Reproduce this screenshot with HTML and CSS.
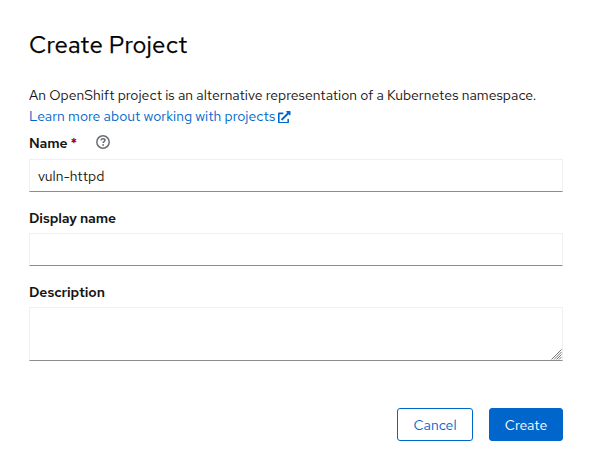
FILE: index.html
```html
<!DOCTYPE html>
<html lang="en">
<head>
<meta charset="utf-8">
<title>Create Project</title>
<link rel="stylesheet" href="styles.css">
</head>
<body>
<main class="modal">
  <h1 class="title"><span>Create Project</span></h1>
  <p class="intro">
    <span class="sentence">An OpenShift project is an alternative representation of a Kubernetes namespace.</span>
    <a class="link" href="#"><span class="link-text">Learn more about working with projects</span><svg class="external" viewBox="0 0 512 512" aria-hidden="true"><path fill="currentColor" d="M432 320h-32a16 16 0 0 0-16 16v112H64V128h144a16 16 0 0 0 16-16V80a16 16 0 0 0-16-16H48a48 48 0 0 0-48 48v352a48 48 0 0 0 48 48h352a48 48 0 0 0 48-48V336a16 16 0 0 0-16-16zM488 0H360c-21.400 0-32 25.900-17 41l35.700 35.700L135 320.400a24 24 0 0 0 0 34L157.700 377a24 24 0 0 0 34 0L435.300 133.300 471 169c15 15 41 4.500 41-17V24a24 24 0 0 0-24-24z"/></svg></a>
  </p>
  <form class="form">
    <div class="field">
      <div class="label-row">
        <label class="label" for="name">Name</label><span class="required">*</span>
        <svg class="help" viewBox="0 0 14 14" aria-hidden="true"><circle cx="7" cy="7" r="6.200"/><path d="M5 5.400C5.200 4.200 6 3.700 7 3.700c1.200 0 2 .7 2 1.600 0 1.300-1.900 1.400-1.900 2.800"/><circle class="dot" cx="7.100" cy="10" r=".9"/></svg>
      </div>
      <input class="control" id="name" type="text" value="vuln-httpd">
    </div>
    <div class="field">
      <div class="label-row"><label class="label" for="display">Display name</label></div>
      <input class="control" id="display" type="text">
    </div>
    <div class="field">
      <div class="label-row"><label class="label" for="description">Description</label></div>
      <div class="area">
        <textarea class="control" id="description"></textarea>
        <svg class="grip" viewBox="0 0 11 11" aria-hidden="true"><path d="M.5 10.500l10-10M3 10.500l7.500-7.500M5.500 10.500l5-5M8 10.500l2.500-2.500"/></svg>
      </div>
    </div>
    <div class="actions">
      <button class="button cancel" type="button">Cancel</button>
      <button class="button create" type="button">Create</button>
    </div>
  </form>
</main>
</body>
</html>
```
FILE: styles.css
```css
* { box-sizing: border-box; }

body {
  margin: 0;
  background: #fff;
  color: #151515;
  font: 14px/21px "Red Hat Text", Lato, sans-serif;
}

.modal { padding: 29px 29px 0; }

.title {
  margin: 0;
  font: 400 24px/32px "Red Hat Text", Lato, sans-serif;
  letter-spacing: .2px;
  color: #000;
  -webkit-text-stroke: .25px #000;
}

.intro { margin: 24px 0 0; white-space: nowrap; }
.sentence { display: block; }

.link {
  display: flex;
  align-items: center;
  gap: 3px;
  color: #06c;
  text-decoration: none;
}
.external { width: 12.500px; height: 12.500px; margin-top: 1px; }

.field { margin-bottom: 15px; }

.label-row { display: flex; height: 26px; line-height: 21px; padding-top: 1px; }
.field:first-child .label-row { height: 32px; padding-top: 6px; }
.label { font-weight: 600; letter-spacing: -.1px; }
.required { margin-left: 3px; color: #a30000; font-weight: 600; }
.help {
  width: 14px;
  height: 14px;
  margin: 2px 0 0 19px;
  fill: none;
  stroke: #6a6e73;
  stroke-width: 1.500;
}
.help .dot { fill: #6a6e73; stroke: none; }

.control {
  display: block;
  width: 100%;
  height: 33px;
  margin: 0;
  padding: 5px 8px;
  border: 1px solid #f0f0f0;
  border-bottom-color: #8a8d90;
  border-radius: 0;
  outline: 0;
  background: #fff;
  color: #151515;
  font: inherit;
}
.area { position: relative; }
textarea.control { height: 54px; resize: none; }
.grip {
  position: absolute;
  right: 1px;
  bottom: 1px;
  width: 11px;
  height: 11px;
  fill: none;
  stroke: #777;
  stroke-width: 1;
}

.actions { display: flex; justify-content: flex-end; gap: 16px; margin-top: 47px; }
.button {
  width: 76px;
  height: 33px;
  padding: 2px 0 0;
  border: 1px solid #06c;
  border-radius: 3px;
  font: inherit;
  line-height: 21px;
}
.cancel { background: #fff; color: #06c; }
.create { width: 74px; background: #06c; color: #fff; }
```
